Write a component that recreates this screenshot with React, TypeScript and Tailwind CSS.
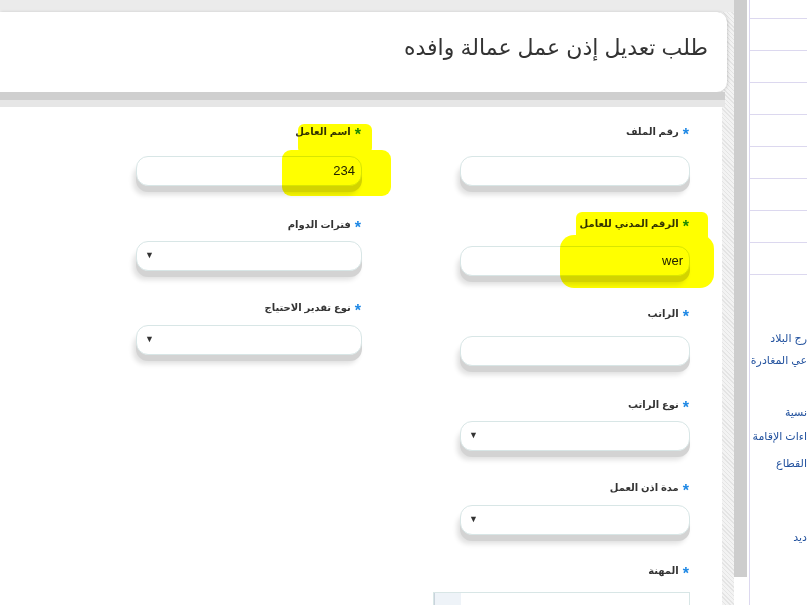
const arabic = "font-['Liberation_Sans','DejaVu_Sans',sans-serif]";

function Label({ text }: { text: string }) {
  return (
    <div className="flex h-[16px] items-center gap-[4px] pr-[1px] text-[10px] font-bold leading-none text-[#333]">
      <span className="mt-[5px] text-[16px] text-[#1e88e5]">*</span>
      <span>{text}</span>
    </div>
  );
}

const boxCls =
  "flex h-[30px] items-center rounded-[12px] border border-[#d8e6e6] bg-white shadow-[0_6px_0_#d3d3d3,-3px_9px_5px_#e1e1e1]";

function TextBox({ value = "" }: { value?: string }) {
  return (
    <div className={`${boxCls} justify-start px-[6px] font-['Liberation_Sans',sans-serif] text-[13px] text-[#222]`}>
      {value}
    </div>
  );
}

function SelectBox() {
  return (
    <div className={`${boxCls} justify-end pl-[8px] text-[9px] text-[#333]`}>▼</div>
  );
}

// the menu is wider than the window; only the tail of each entry shows
const sideLinks = [
  { t: "رج البلاد", cls: "mt-[52px]" },
  { t: "عي المغادرة", cls: "" },
  { t: "نسية", cls: "mt-[30px]" },
  { t: "اءات الإقامة", cls: "mt-[2px]" },
  { t: "القطاع", cls: "mt-[5px]" },
  { t: "ديد", cls: "mt-[52px]" },
];

export default function App() {
  return (
    <div className={`relative flex h-[605px] w-[807px] overflow-hidden bg-white ${arabic}`}>
      {/* page column */}
      <div className="flex w-[734px] shrink-0 flex-col bg-[repeating-linear-gradient(45deg,#e4e4e4_0,#e4e4e4_1px,#f3f3f3_1px,#f3f3f3_3px)]">
        <div className="h-[12px] shrink-0 bg-[#ebebeb]" />
        <div className="mr-[7px] flex h-[80px] shrink-0 items-center justify-end rounded-r-[10px] bg-white pb-[10px] pr-[19px] shadow-[1px_0_3px_rgba(0,0,0,0.15)]">
          <h1 dir="rtl" className="text-[22px] font-normal text-[#333]">
            طلب تعديل إذن عمل عمالة وافده
          </h1>
        </div>
        <div className="mr-[9px] h-[8px] shrink-0 bg-[#cfcfcf]" />
        <div className="mr-[9px] h-[7px] shrink-0 bg-[#e6e6e6]" />
        <div className="mr-[12px] min-h-0 flex-1 overflow-hidden bg-white">
          <div dir="rtl" className="flex gap-[98px] pr-[32px] pt-[17px]">
            {/* right column */}
            <div className="flex w-[230px] flex-col">
              <Label text="رقم الملف" />
              <div className="mt-[16px]"><TextBox /></div>
              <div className="mt-[30px]"><Label text="الرقم المدني للعامل" /></div>
              <div className="mt-[14px]"><TextBox value="wer" /></div>
              <div className="mt-[30px]"><Label text="الراتب" /></div>
              <div className="mt-[14px]"><TextBox /></div>
              <div className="mt-[31px]"><Label text="نوع الراتب" /></div>
              <div className="mt-[8px]"><SelectBox /></div>
              <div className="mt-[29px]"><Label text="مدة اذن العمل" /></div>
              <div className="mt-[9px]"><SelectBox /></div>
              <div className="mt-[28px]"><Label text="المهنة" /></div>
              <div className="-ml-[27px] mt-[13px] flex h-[30px] shrink-0 border border-[#d8e6e6] bg-white">
                <div className="mr-auto w-[27px] border-l border-[#c9d3dc] bg-[#eef3f8]" />
              </div>
            </div>
            {/* left column */}
            <div className="flex w-[226px] flex-col">
              <Label text="اسم العامل" />
              <div className="mt-[16px]"><TextBox value="234" /></div>
              <div className="mt-[31px]"><Label text="فترات الدوام" /></div>
              <div className="mt-[8px]"><SelectBox /></div>
              <div className="mt-[29px]"><Label text="نوع تقدير الاحتياج" /></div>
              <div className="mt-[9px]"><SelectBox /></div>
            </div>
          </div>
        </div>
      </div>

      {/* scrollbar */}
      <div className="w-[13px] shrink-0 bg-white">
        <div className="h-[577px] bg-[#cdcdcd]" />
      </div>

      {/* side menu */}
      <div className="ml-[2px] flex-1 overflow-hidden border-l border-[#dcd8ef] bg-white text-[11px] text-[#24539f]">
        <div className="h-[19px] border-b border-[#dcd8ef]" />
        {Array.from({ length: 8 }).map((_, i) => (
          <div key={i} className="h-[32px] border-b border-[#dcd8ef]" />
        ))}
        {sideLinks.map((l) => (
          <div key={l.t} dir="rtl" className={`h-[22px] whitespace-nowrap text-right leading-[22px] ${l.cls}`}>
            {l.t}
          </div>
        ))}
      </div>

      {/* yellow marker annotations */}
      <svg className="pointer-events-none absolute left-0 top-0 mix-blend-multiply" width="807" height="605">
        <g fill="#ffff00">
          <rect x="298" y="124" width="74" height="30" rx="6" />
          <rect x="282" y="150" width="109" height="46" rx="9" />
          <rect x="576" y="212" width="132" height="31" rx="6" />
          <rect x="560" y="235" width="154" height="53" rx="14" />
        </g>
      </svg>
    </div>
  );
}
